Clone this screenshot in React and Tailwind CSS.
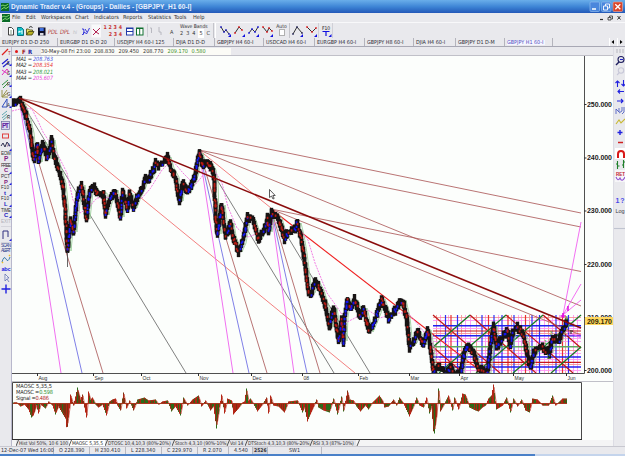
import React from "react";
import clsx from "clsx";

const menuItems = [
  { label: "File", width: "w-[14px]" },
  { label: "Edit", width: "w-[15px]" },
  { label: "Workspaces", width: "w-[34px]" },
  { label: "Chart", width: "w-[19px]" },
  { label: "Indicators", width: "w-[29px]" },
  { label: "Reports", width: "w-[25px]" },
  { label: "Statistics", width: "w-[26px]" },
  { label: "Tools", width: "w-[19px]" },
  { label: "Help", width: "w-[14px]" },
];

const chartTabs = [
  { label: "EURJPY D1 D-D 250", width: "w-[58px]" },
  { label: "EURGBP D1 D-D 20", width: "w-[57px]" },
  { label: "USDJPY H4 60-I 125", width: "w-[59px]" },
  { label: "DJIA D1 D-D", width: "w-[41px]" },
  { label: "GBPJPY H4 60-I", width: "w-[49px]" },
  { label: "USDCAD H4 60-I", width: "w-[51px]" },
  { label: "EURGBP H4 60-I", width: "w-[50px]" },
  { label: "GBPJPY H8 60-I", width: "w-[49px]" },
  { label: "DJIA H4 60-I", width: "w-[42px]" },
  { label: "GBPJPY D1 D-M", width: "w-[49px]" },
  { label: "GBPJPY H1 60-I", width: "w-[48px]", active: true },
];

const indicatorTabs = [
  { label: "Hist Vol 50%, 10 6 100", width: "w-[53px]" },
  { label: "MAOSC 5,35,5", width: "w-[36px]", active: true },
  { label: "DTOSC 10,4,10,3 (80%-20%)", width: "w-[67px]" },
  { label: "Stoch 4,3,10 (90%-10%)", width: "w-[55px]" },
  { label: "Vol 14", width: "w-[18px]" },
  { label: "DTStoch 4,3,10,3 (80%-20%)", width: "w-[65px]" },
  { label: "RSI 3,3 (87%-10%)", width: "w-[46px]" },
];

const statusItems = [
  { label: "12-Dec-07 Wed 16:00", width: "w-[54px]" },
  { label: "O 228.390", width: "w-[36px]" },
  { label: "H 230.410", width: "w-[36px]" },
  { label: "L 228.340", width: "w-[36px]" },
  { label: "C 229.970", width: "w-[36px]" },
  { label: "R 2.070", width: "w-[31px]" },
  { label: "4.540", width: "w-[24px]" },
  { label: "2526", width: "w-[15px]", dark: true },
  { label: "SW1", width: "w-[54px]" },
];

// [x, y] pivots of the hourly price swing
const price = [
  [12, 104], [16, 102], [19, 99], [23, 108], [27, 120], [30, 133], [32, 153], [34, 158], [37, 144], [38, 162],
  [42, 142], [47, 159], [51, 140], [53, 152], [57, 167], [62, 183], [65, 213], [67, 251], [70, 220], [73, 232],
  [76, 203], [78, 190], [81, 185], [86, 219], [89, 192], [92, 186], [97, 193], [103, 193], [105, 215], [108, 203],
  [114, 190], [117, 202], [120, 217], [122, 194], [127, 208], [129, 194], [133, 208], [137, 197], [142, 187],
  [145, 177], [148, 180], [152, 172], [155, 163], [160, 165], [167, 157], [170, 168], [175, 177], [179, 201],
  [182, 183], [187, 192], [192, 182], [195, 173], [197, 160], [199, 153], [203, 167], [207, 161], [212, 170],
  [214, 183], [215, 217], [217, 234], [221, 205], [225, 236], [230, 223], [232, 236], [238, 252], [242, 243],
  [247, 217], [252, 220], [258, 239], [263, 230], [267, 217], [268, 232], [271, 212], [278, 218], [284, 239],
  [288, 232], [293, 232], [297, 223], [300, 235], [303, 253], [306, 277], [308, 293], [311, 293], [315, 281],
  [320, 290], [325, 307], [329, 327], [333, 308], [338, 341], [341, 320], [343, 341], [344, 317], [347, 300],
  [350, 309], [354, 300], [360, 317], [363, 308], [369, 332], [373, 323], [377, 313], [381, 299], [388, 318],
  [397, 307], [402, 300], [406, 317], [409, 347], [413, 343], [417, 332], [423, 345], [427, 330], [430, 347],
  [433, 373], [438, 367], [445, 374], [450, 367], [454, 375], [460, 373], [464, 352], [468, 345], [473, 353],
  [478, 370], [487, 373], [490, 345], [493, 326], [496, 347], [500, 340], [507, 330], [510, 345], [512, 332],
  [517, 327], [523, 335], [527, 355], [530, 366], [535, 348], [542, 348], [549, 353], [552, 338], [558, 342],
  [562, 330], [567, 322],
];

const oscPivots = [
  [13, 1], [16, 1], [20, -3], [24, -1], [28, -6], [31, -14], [33, -12], [36, -2], [38, -10], [40, -1], [45, -5],
  [48, 2], [52, -2], [55, -11], [58, -3], [62, -10], [65, -15], [66.5, -28], [69, -5], [70, 9], [73, -2], [77, 16],
  [80, 4], [82, 9], [84, -4], [86, -14], [88, 12], [90, 4], [92, 6], [95, -1], [98, -4], [102, -1], [106, -12],
  [109, 2], [112, 4], [115, 5], [117, -2], [120, -7], [123, 11], [126, -5], [129, 3], [133, -7], [137, 4],
  [144, 6], [148, 3], [155, 4], [158, -1], [162, 2], [167, 3], [171, -8], [175, -3], [180, -12], [183, 6], [187, -2],
  [192, 4], [198, 8], [201, -3], [205, 3], [210, -7], [213, -3], [216, -25], [219, -4], [221, 9], [224, -10], [227, 5],
  [231, 3], [233, -11], [238, -5], [242, 1], [244, 2], [246, 15], [248, 3], [250, 5], [257, -8], [262, -1], [266, 6],
  [268, -10], [270, 8], [273, -2], [278, -3], [284, -9], [288, 2], [297, 3], [302, -9], [304, -4], [307, -18],
  [312, -6], [316, 4], [318, -4], [323, -7], [329, -9], [333, 5], [337, -11], [341, 7], [343, -8], [347, 13],
  [349, 4], [353, 3], [356, -3], [360, -8], [365, -2], [368, -6], [372, 1], [379, 8], [382, 3], [384, -4], [388, -3],
  [393, 4], [396, -2], [399, 6], [403, 0], [409, -13], [413, -3], [416, 6], [419, -2], [423, -4], [426, 6],
  [429, -10], [431, -3], [433.5, -34], [436, -14], [438, 15], [440, -8], [443, -2], [448, 8], [452, -7], [454, 6],
  [458, -6], [462, 10], [465, 9], [469, -4], [475, -7], [478, -8], [482, -4], [485, -2], [488, 5], [491, 8], [493, 19],
  [496, -6], [502, -2], [506, 6], [510, -9], [513, 5], [517, -3], [521, 4], [525, -7], [529, -9], [532, 5], [537, 4],
  [542, -2], [548, -2], [552, 8], [555, -2], [562, 5], [566, 5],
];

const months = [
  ["Aug", 37.5], ["Sep", 93.5], ["Oct", 141.5], ["Nov", 198.5], ["Dec", 251.5], ["08", 302.5],
  ["Feb", 358.5], ["Mar", 409.5], ["Apr", 459.5], ["May", 513.5], ["Jun", 566.5],
];

const scale = [["250.000", 104], ["240.000", 157.5], ["230.000", 210.5], ["220.000", 264], ["210.000", 317], ["200.000", 370]];

// x1, y1, x2, y2, color, width
const fans = [
  [19, 98, 581, 213, "#a85050", 0.8],
  [19, 98, 355, 373, "#f06060", 0.8],
  [19, 98, 186, 373, "#606060", 0.8],
  [19, 98, 61, 373, "#f070f0", 1],
  [19, 98, 82, 373, "#7070e4", 0.9],
  [19, 98, 103, 373, "#b06464", 0.9],
  [199, 150, 581, 227, "#a85050", 0.8],
  [199, 150, 581, 306, "#a85050", 0.8],
  [199, 150, 271, 208, "#f06060", 0.8],
  [199, 150, 233, 373, "#f070f0", 1],
  [199, 150, 249, 373, "#7070e4", 0.9],
  [199, 150, 267, 373, "#b06464", 0.9],
  [199, 150, 334, 373, "#606060", 0.8],
  [271, 209, 581, 271.5, "#a85050", 0.8],
  [271, 209, 581, 335, "#a85050", 0.8],
  [271, 209, 294, 373, "#f070f0", 1],
  [271, 209, 307, 373, "#7070e4", 0.9],
  [271, 209, 320, 373, "#b06464", 0.9],
  [271, 209, 370, 373, "#606060", 0.8],
];

const noise = (i) => {
  const v = Math.sin(i * 12.9898) * 43758.5453;
  return v - Math.floor(v);
};

const priceBars = (() => {
  const bars = [];
  for (let i = 1; i < price.length; i++) {
    const [x1, y1] = price[i - 1];
    const [x2, y2] = price[i];
    const n = Math.max(1, Math.round(Math.hypot(x2 - x1, y2 - y1) / 1.7));
    for (let k = 0; k < n; k++) {
      bars.push({
        x: x1 + ((x2 - x1) * k) / n,
        y: y1 + ((y2 - y1) * k) / n + (noise(bars.length + 300) - 0.5) * 4,
        up: y2 < y1,
      });
    }
  }
  return bars;
})();

const oscBars = (() => {
  const bars = [];
  let i = 1;
  for (let x = 13; x <= 566; x++) {
    while (oscPivots[i][0] < x) i++;
    const [x1, v1] = oscPivots[i - 1];
    const [x2, v2] = oscPivots[i];
    bars.push([x, v1 + ((v2 - v1) * (x - x1)) / (x2 - x1)]);
  }
  return bars;
})();

const bg = "bg-[#e9e9ed]";

const Sep = ({ className }) => <div className={clsx("h-full w-px shrink-0 bg-[#c4c4ca]", className)} />;

const WaveIcon = ({ points, line = "#303030", dots = "#e02020", tail = true }) => (
  <svg width="14" height="15" viewBox="0 0 14 15" className="shrink-0">
    <polyline points={points.map((p) => p.join(",")).join(" ")} fill="none" stroke={line} strokeWidth="1" />
    {points.map((p, i) => (
      <rect key={i} x={p[0] - 0.8} y={p[1] - 0.8} width="1.6" height="1.6" fill={dots} />
    ))}
    {tail && <path d="M13 11v3h-3z" fill="#1010e0" />}
  </svg>
);

const AppIcon = () => (
  <svg width="8" height="8" viewBox="0 0 8 8" className="shrink-0">
    <rect width="8" height="8" fill="#0a6a28" />
    <path d="M0 3l2-1 2 1 3.500-2M0 6.500l3-2 2 1 3-2" stroke="#8ae070" strokeWidth=".9" fill="none" />
  </svg>
);

const TitleBar = () => (
  <div className="flex h-[13px] items-center bg-linear-to-b from-[#6aaeea] via-[#3f86d6] to-[#2358b8] pr-[2px] pl-px">
    <AppIcon />
    <span className="ml-[2px] grow pt-px font-['Liberation_Sans'] text-[6.500px] font-bold whitespace-pre text-[#e8f0fc]">
      Dynamic Trader v.4 - (Groups) - Dailies - [GBPJPY_H1 60-I]
    </span>
    <svg width="34" height="11" viewBox="0 0 34 11">
      <rect x="1" y="1" width="9.5" height="9.5" rx="1" fill="#4a86dc" stroke="#9cc4f4" strokeWidth=".6" />
      <path d="M3 8h4" stroke="#fff" strokeWidth="1.5" />
      <rect x="12.5" y="1" width="9.5" height="9.5" rx="1" fill="#4a86dc" stroke="#9cc4f4" strokeWidth=".6" />
      <path d="M16.5 5V3h4v4h-2M14.5 5h4v4h-4z" stroke="#fff" fill="none" strokeWidth=".9" />
      <rect x="24" y="1" width="9.5" height="9.5" rx="1" fill="#d8452c" stroke="#f4b0a0" strokeWidth=".6" />
      <path d="M26.300 3.300l5 5m0-5l-5 5" stroke="#fff" strokeWidth="1.300" />
    </svg>
  </div>
);

const MenuBar = () => (
  <div className="flex h-[9px] items-center pl-[2px] text-[5.600px] text-[#303030]">
    <AppIcon />
    <div className="ml-[2px] flex grow">
      {menuItems.map((item) => (
        <span key={item.label} className={clsx("shrink-0 whitespace-nowrap", item.width)}>{item.label}</span>
      ))}
    </div>
    <svg width="26" height="8" viewBox="0 0 26 8" fill="none" stroke="#303030">
      <path d="M1 5.500h3" strokeWidth="1.200" />
      <path d="M10.500 3V2h3v3h-1M9 3.500h3v2.500h-3z" strokeWidth=".8" />
      <path d="M18.500 2l3 3.500m0-3.500l-3 3.500" strokeWidth="1" />
    </svg>
  </div>
);

const Toolbar = () => (
  <div className="flex h-4 items-stretch border-t border-[#f8f8fa]">
    <svg width="102" height="15" viewBox="0 0 102 15" className="shrink-0">
      <path d="M1 1v13" stroke="#fff" />
      <path d="M8.500 4.500h3l2 2v5.500h-5z" fill="#fff" stroke="#303030" strokeWidth=".9" />
      <path d="M10 8h2M10 10h2" stroke="#507050" strokeWidth=".7" />
      <path d="M17.500 4.500h4l2 2v6h-6z" fill="#10c0c8" stroke="#087080" />
      <path d="M19 10V8l1.500 1L22 7.500V11" stroke="#fff" fill="none" />
      <path d="M26.500 12V6h2l1 1h3v1.500" fill="#e8e060" stroke="#404010" strokeWidth=".8" />
      <path d="M26.500 12l2-3.500H34l-2 3.500z" fill="#b8b020" stroke="#404010" strokeWidth=".8" />
      <path d="M29 4.500q2-2 3.500 0" stroke="#303030" fill="none" />
      <rect x="38" y="4.500" width="7.500" height="8" fill="#101028" />
      <rect x="39.700" y="5" width="4" height="3" fill="#4070e0" />
      <rect x="40" y="10" width="3.500" height="2.500" fill="#d8d8e0" />
      <g fontSize="6" fontStyle="italic" fill="#b04040">
        <text x="48" y="10.800" textLength="10" lengthAdjust="spacingAndGlyphs">PDL</text>
        <text x="60" y="10.800" textLength="10" lengthAdjust="spacingAndGlyphs">DPL</text>
        <text x="73" y="10.500" fontSize="5" fill="#b8b8c0">hi</text>
      </g>
      <path d="M82 6q2-1 2 2t-1.500 4M82.500 12l2-3 2 2 3-6M85 6l2 3" stroke="#2020d8" fill="none" strokeWidth=".9" />
      <rect x="91.500" y="1.500" width="9.500" height="13" fill="#fff" opacity=".7" />
      <path d="M93 6l3 3 4-4M93 12l3-3 3 2" stroke="#b02050" fill="none" />
    </svg>
    <div className="flex w-[21px] shrink-0 flex-col justify-center pl-[1.500px] text-[5.300px] leading-[6.500px] font-bold text-[#c83030]">
      <div className="flex justify-between pr-px"><span>1</span><span>2</span><span>3</span><span>4</span></div>
      <div className="flex justify-between pr-px pl-[5.300px]"><span>2</span><span>3</span><span>4</span></div>
    </div>
    <svg width="56" height="15" viewBox="0 0 56 15" className="shrink-0">
      <rect x="3.500" y="5" width="6.500" height="7" fill="#fff" stroke="#2038a8" />
      <path d="M3 8.500h7M3 5.500h7" stroke="#2038a8" />
      <rect x="13.500" y="5" width="6.500" height="7" fill="#fff" stroke="#107030" />
      <path d="M16.700 5v7M13 5.500h7" stroke="#107030" />
      <path d="M24.500 1v13" stroke="#c0c0c8" strokeWidth=".7" />
      <path d="M27 5h1.500v5M36 4v5h2v3" stroke="#b8b8c0" fill="none" />
      <text x="47" y="11" fontSize="5.500" fill="#404040">A</text>
    </svg>
    <div className="flex w-[34px] shrink-0 flex-col text-[5px] leading-[6px] text-[#303030]">
      <span className="pl-px whitespace-nowrap">Wave Bands</span>
      <div className="flex justify-between pr-[3px] pl-px text-[5.500px] leading-[9px]">
        <span>2</span><span>3</span><span>4</span><span className="bg-white px-px">5</span><span>C</span>
      </div>
    </div>
    <Sep />
    <Sep className="ml-px bg-white" />
    <div className="ml-[2px] flex">
      <WaveIcon points={[[3, 4], [6, 9], [8, 7], [11, 11]]} dots="#2020c0" />
      <WaveIcon points={[[3, 10], [7, 4], [10, 7]]} />
      <WaveIcon points={[[3, 10], [6, 6], [9, 9], [12, 4]]} dots="#2020e0" />
      <WaveIcon points={[[3, 4], [7, 9], [9, 5], [12, 8]]} />
    </div>
    <div className="flex w-[15px] shrink-0 flex-col items-center text-[5px] leading-[6px] text-[#303030]">
      <span>Auto</span>
      <span className="h-[7px] w-[6px] border border-[#b0b0b0] bg-white" />
    </div>
    <div className="flex items-stretch">
      <Sep />
      <WaveIcon points={[[3, 11], [7, 4], [12, 10]]} dots="#303060" />
      <WaveIcon points={[[3, 4], [8, 9], [12, 5]]} />
      <svg width="15" height="15" viewBox="0 0 15 15">
        <path d="M.5 0v15M14.500 0v15" stroke="#c0c0c8" strokeWidth=".6" />
        <text x="4" y="6.500" fontSize="5" fill="#202020" textLength="8">F10</text>
        <path d="M4.500 8.500h7M8 8v5" stroke="#1010e0" strokeWidth="1.200" />
        <path d="M13.500 11v3h-3z" fill="#1010e0" />
      </svg>
    </div>
  </div>
);

const ChartTabs = () => (
  <div className="flex h-[9px] items-center border-b border-[#a8a8b4] text-[5.400px] text-[#303038]">
    {chartTabs.map((tab) => (
      <div
        key={tab.label}
        className={clsx("flex h-full shrink-0 items-center border-r border-[#b4b4bc] pt-[1.500px] pl-[2px] whitespace-pre", tab.width)}
      >
        <span className={tab.active ? "bg-[#f6f6ff] pr-[2px] text-[#5050c0]" : ""}>{tab.label}</span>
      </div>
    ))}
    <svg width="16" height="8" viewBox="0 0 16 8" className="ml-auto">
      <path d="M.5 0v8M8.500 0v8" stroke="#fff" />
      <path d="M5 2v4L2.500 4zM11 2v4l2.500-2z" fill="#000" />
    </svg>
  </div>
);

const LeftTools = () => (
  <div className="w-3 shrink-0 border-r border-[#b8b8cc]">
    <svg width="12" height="399" viewBox="0 47 12 399" fontFamily="Liberation Sans">
      <g fill="none" strokeWidth="1">
        <path d="M2 55l6-6" stroke="#e02020" strokeWidth="1.300" />
        <path d="M2 64l6-5M3 67l6-5" stroke="#2020d0" strokeWidth="1.200" />
        <path d="M2 75l5-6 2 3M2 70l6 4" stroke="#e030c0" />
        <path d="M2 85l6-5M3 88l5-5" stroke="#309040" />
        <path d="M2 97V90M2 97h6M2 97l5-7M2 97l6-4" stroke="#98944a" />
        <path d="M2 107l5-8v8z" stroke="#3050c0" />
        <path d="M2 115l5-4M2 118l5-4M3 120l6-5" stroke="#60a8b0" />
        <rect x="1.500" y="121.500" width="8" height="8" fill="#d8d8f0" stroke="#7070a0" strokeWidth=".7" />
        <rect x="2.500" y="134" width="6" height="4" stroke="#e04040" />
        <path d="M1 146l2-3 2 4 2-5 3 4" stroke="#303050" />
        <path d="M3 239v-8h5v6" stroke="#303080" />
        <path d="M2 262q2-7 4-3t4-2" stroke="#4080b0" />
        <path d="M2 263l1-1M9 256l1-1" stroke="#f0c020" strokeWidth="1.500" />
        <path d="M5 274v7l2-2 2 3M5 274l4 4H6.500" stroke="#6070b0" fill="#fff" strokeWidth=".8" />
        <path d="M1.500 289h9M6 284.500v9" stroke="#2020e0" strokeWidth="1.400" />
        <path d="M1 226.500h10M1 242.500h10" stroke="#c8c8d0" strokeWidth=".6" />
      </g>
      {[66, 77, 87, 98, 108, 151, 174, 185, 196, 207, 218, 241].map((y) => (
        <path key={y} d={`M11.500 ${y - 2.500}v2.500h-2.500z`} fill="#1818e0" />
      ))}
      <g fontSize="4.500" fill="#303030">
        <text x="8" y="55" fill="#c02020">T</text>
        <text x="7" y="64.500">E</text>
        <text x="7" y="75">S</text>
        <text x="7" y="86">R</text>
        <text x="7" y="96">G</text>
        <text x="7" y="107">A</text>
        <text x="7" y="119">R</text>
        <text x="7" y="147" fill="#303080">A</text>
        <text x="1" y="155" textLength="10">EOW</text>
        <text x="1" y="166.500" textLength="10">FREE</text>
        <text x="1" y="177.800" textLength="9">PCT</text>
        <text x="1" y="189" textLength="8">F10</text>
        <text x="1" y="200.300" textLength="8">F10</text>
        <text x="1" y="211.600" textLength="10">TIME</text>
        <text x="1" y="223" textLength="10" fill="#b0b0b8">EXIT</text>
        <text x="1" y="246.500" textLength="10" fill="#304090">SCAN</text>
        <text x="1" y="251.500" textLength="10" fill="#304090">ALERT</text>
      </g>
      <g fontSize="6.500" fontWeight="bold">
        <text x="2" y="127.800" fill="#6020a0" textLength="7">PT</text>
        <text x="4" y="161" fill="#802080">P</text>
        <g fontSize="5.800">
          <text x="4" y="172.300" fill="#802080">C</text>
          <text x="4" y="183.500" fill="#802080">P</text>
          <text x="4" y="194.800" fill="#2020c0">t</text>
          <text x="4" y="206" fill="#2020c0">L</text>
          <text x="4" y="217.300" fill="#2020c0">C</text>
        </g>
        <text x="1.500" y="271" fill="#2020e0" fontSize="5.500" textLength="9">abc</text>
      </g>
    </svg>
  </div>
);

const RightTools = () => (
  <div className="w-3 shrink-0 border-l border-[#dcdce4]">
    <svg width="12" height="399" viewBox="613 47 12 399" fontFamily="Liberation Sans">
      <g fill="none" strokeWidth="1.100">
        <path d="M615 50h9M615 52h9" stroke="#b8b8c0" strokeDasharray="2 1" />
        <path d="M615 65l3-3" stroke="#202060" strokeWidth="1.500" />
        <circle cx="620" cy="59.500" r="3" stroke="#202060" />
        <path d="M619 59.500h3" stroke="#2020d0" />
        <path d="M616 75l2-2" stroke="#c8c8d8" />
        <circle cx="620" cy="70.500" r="2.700" stroke="#c8c8d8" />
        <path d="M616.500 87v-6m-2 2l2-2 2 2M622.500 80v6m-2-2l2 2 2-2" stroke="#2020e0" />
        <path d="M623 91.500h-6m2-2l-2 2 2 2M616 101h6m-2-2l2 2-2 2" stroke="#2020e0" />
        <path d="M615 114v-5l3 3v-4m0 5l3-2v-4m0 7l2-2v-5" stroke="#4050c0" strokeWidth=".8" />
        <path d="M615 124l3-4 2 3 4-4" stroke="#c8b830" />
        <path d="M616.500 132.500h5M619 130v5" stroke="#2020e0" strokeWidth="1.400" />
        <path d="M617 142.500h5" stroke="#d02020" strokeWidth="1.500" />
        <rect x="614" y="148" width="11" height="11" fill="#fff" stroke="none" />
        <path d="M617 158v-4q0-3 3-3t3 3v4" stroke="#d81818" strokeWidth="2" />
        <path d="M616.500 161v8M615 164h1.500M616.500 166h2M622.500 160v8M621 165h1.500M622.500 162h2" stroke="#20802c" />
        <rect x="614" y="170" width="11" height="12" fill="#fff" opacity=".6" stroke="none" />
        <path d="M615 177q2 5 4 1 2 5 5-1" stroke="#9050d0" />
        <path d="M613 228.500h12" stroke="#c0c4d0" />
      </g>
      <text x="615" y="176" fontSize="4.500" fontWeight="bold" fill="#c02030" textLength="9">RET</text>
      <text x="614.500" y="202.500" fontSize="7" fontWeight="bold" fill="#4848e8" textLength="9">1?</text>
      <text x="614.500" y="213" fontSize="5.500" fill="#404048" textLength="9">Log</text>
    </svg>
  </div>
);

const InfoRow = () => (
  <div className="flex h-[9px] items-center border-b border-[#c0c0c8] bg-[#e9e9ed] pt-px text-[5.500px] text-[#303030]">
    <span className="flex w-[10px] shrink-0 pl-[3px]">
      <span className="size-[3px] rounded-full bg-[#e01818]" />
    </span>
    <span className="w-[6px] text-[6px] font-bold text-[#a02020]">F</span>
    <span className="w-[13px] text-[6px] font-bold text-[#2020a0]">R</span>
    <div className="flex h-[7px] w-[190px] items-center bg-[#fbfbf6] whitespace-nowrap">
      <span className="w-[53px]">30-May-08 Fri 23:00</span>
      <span className="w-[24.500px]">208.830</span>
      <span className="w-[24.500px]">209.450</span>
      <span className="w-[24.500px]">208.770</span>
      <span className="w-[24px] text-[#409028]">209.170</span>
      <span className="text-[#409028]">0.580</span>
    </div>
  </div>
);

const TimeGrid = () => {
  const blueX = [445.5, 457.5, 482, 494, 502, 514, 532, 539.5, 556, 568.5];
  const redX = [451, 488.5, 508, 525.5, 562.5];
  const pinkX = [436.5, 440.5, 448.5, 461.5, 465.5, 470.5, 476.5, 485.5, 498.5, 511.5, 518.5, 521.5, 529.5, 536.5, 544.5, 548.5, 552.5, 559.5, 565.5, 573.5, 577.5];
  const pinkY = [317.5, 320.5, 328.5, 333.5, 338.5, 341.5, 350.5, 353.5, 359.5, 364.5, 370.5];
  const reds = [[433, 315, 500, 373], [470, 315, 536, 373], [506, 315, 573, 373], [543, 315, 581, 348], [433, 347, 463, 373]];
  const greens = [[433, 347, 470, 315], [439, 373, 506, 315], [476, 373, 543, 315], [513, 373, 581, 315], [551, 373, 581, 347]];
  return (
    <g strokeWidth="1">
      {pinkX.map((x, i) => <path key={x} d={`M${x} 315v58`} stroke={i % 3 ? "#ff96f4" : "#f49494"} strokeWidth=".9" />)}
      {pinkY.map((y, i) => <path key={y} d={`M433 ${y}h148`} stroke={i % 3 ? "#ff96f4" : "#f49494"} strokeWidth=".9" />)}
      {blueX.map((x) => <path key={x} d={`M${x} 315v58`} stroke="#3030f4" strokeWidth="1.200" />)}
      {redX.map((x) => <path key={x} d={`M${x} 315v58`} stroke="#e83030" strokeWidth="1.200" />)}
      {[325.7, 335.7, 357, 367].map((y) => <path key={y} d={`M433 ${y}h148`} stroke="#2020f0" strokeWidth="1.400" />)}
      {[331, 362.3].map((y) => <path key={y} d={`M433 ${y}h148`} stroke="#c81818" strokeWidth="1.200" />)}
      <path d="M433 346.700h148" stroke="#60a860" strokeWidth="1.500" />
      {reds.map((l, i) => <line key={i} x1={l[0]} y1={l[1]} x2={l[2]} y2={l[3]} stroke="#c01818" strokeWidth="1.200" />)}
      {greens.map((l, i) => <line key={i} x1={l[0]} y1={l[1]} x2={l[2]} y2={l[3]} stroke="#187828" strokeWidth="1.300" />)}
    </g>
  );
};

const PriceChart = () => (
  <svg width="601" height="325" viewBox="12 56 601 325" className="block shrink-0 bg-[#fcfefc]" fontFamily="Liberation Sans">
    <clipPath id="plot">
      <rect x="12" y="56" width="570" height="317" />
    </clipPath>
    <g clipPath="url(#plot)" fill="none">
      <TimeGrid />
      {fans.map((l, i) => (
        <line key={i} x1={l[0]} y1={l[1]} x2={l[2]} y2={l[3]} stroke={l[4]} strokeWidth={l[5]} />
      ))}
      <path d="M271 209L483 373" stroke="#f02020" strokeWidth="1.100" />
      {/* moving averages */}
      <polyline
        points={price.map((p) => `${p[0] + 4},${p[1]}`).join(" ")}
        stroke="#90c890"
        strokeWidth=".8"
        strokeLinejoin="round"
      />
      <path
        d="M12 111L24 108 32 109 38 121 43 132 58 155 67 173 73 200 80 213 88 208 97 198 113 197 133 200 142 198 150 189 162 170 172 160 183 173 195 185 205 173 213 168 222 183 228 207 237 228 248 237 262 232 276 222 290 232 301 231 308 240 315 263 327 293 337 307 347 322 357 317 368 310 380 318 397 313 408 313 420 327 432 342 440 362"
        stroke="#f070e0"
        strokeWidth=".9"
        strokeDasharray="2 1"
      />
      {priceBars.map((b, i) => {
        const h = 4 + noise(i) * 5;
        return <path key={i} d={`M${Math.round(b.x) + 0.5} ${b.y - h / 2}v${h}`} stroke="#181414" strokeWidth="3.400" />;
      })}
      {priceBars.map((b, i) => {
        if (noise(i + 900) < 0.5) return null;
        const y = b.y - 1.5 + noise(i + 40) * 2;
        return <rect key={i} x={Math.round(b.x) - 0.3} y={y} width="1.700" height="2.300" fill={b.up ? "#1414f0" : "#b81c14"} />;
      })}
      <path d="M67.500 252v15" stroke="#404040" strokeWidth=".8" />
      <path d="M19 98L581 328" stroke="#8a0c0c" strokeWidth="1.600" />
      <path d="M563 315L581 222M563 315l18-31M563 315l18-15M566 331l15 7M566 335h15" stroke="#f060f0" strokeWidth=".9" />
      <path d="M563 313v5M560.500 316h5M568 306v5" stroke="#e010e0" strokeWidth="1.600" />
      <g fill="#30a030" fontSize="5.500" stroke="none">
        <text x="544" y="344">1</text>
        <text x="547" y="359">2</text>
        <text x="549.500" y="335">3</text>
        <text x="565" y="320">5</text>
      </g>
      <path d="M570 331h3M570 333h2" stroke="#202020" />
      <path d="M269.500 189.500v8l2-1.500 1.500 3 1.200-.6-1.400-2.900h2.400z" fill="#fff" stroke="#303030" strokeWidth=".8" />
    </g>
    <g fontSize="5.800" fontStyle="italic" fill="#303030" fontFamily="DejaVu Sans Condensed">
      {[["MA1 =", "208.763", "#4050e0"], ["MA2 =", "208.354", "#e83030"], ["MA3 =", "208.021", "#309838"], ["MA4 =", "205.607", "#e840d8"]].map((m, i) => (
        <React.Fragment key={m[0]}>
          <text x="16" y={61 + i * 6.3} textLength="16">{m[0]}</text>
          <text x="33" y={61 + i * 6.3} textLength="20" lengthAdjust="spacingAndGlyphs" fill={m[2]}>{m[1]}</text>
        </React.Fragment>
      ))}
    </g>
    <path d="M584.500 56V373.500M12 373.500H584.500" stroke="#505050" fill="none" />
    {scale.map(([label, y]) => (
      <g key={label}>
        <path d={`M584 ${y + 0.5}h2.500`} stroke="#303030" />
        <text x="587" y={y + 2.7} fontSize="7" fontWeight="bold" fill="#202020" textLength="25">{label}</text>
      </g>
    ))}
    <rect x="585" y="317" width="28" height="8" fill="#ffd860" />
    <text x="587" y="323.700" fontSize="7" fontWeight="bold" fill="#302808" textLength="25">209.170</text>
    {months.map(([label, x]) => (
      <g key={label}>
        <path d={`M${x} 373v3`} stroke="#303030" />
        <text x={x + 1} y="380" fontSize="5" fill="#303030">{label}</text>
      </g>
    ))}
  </svg>
);

const Oscillator = () => (
  <svg width="601" height="59" viewBox="12 381 601 59" className="block shrink-0 bg-[#fcfefc]" fontFamily="DejaVu Sans Condensed">
    <path d="M12 381.500h601" stroke="#c0c0c8" />
    <path d="M12.500 382.500h569v57h-569z" fill="none" stroke="#484848" />
    <path d="M12 439.500h570" stroke="#303030" />
    {oscBars.map(([x, v]) => (
      <path key={x} d={`M${x + 0.5} 403.500v${-v}`} stroke={noise(x) > 0.64 ? "#286c18" : noise(x) > 0.3 ? "#b02414" : "#7c3010"} />
    ))}
    <polyline
      points={oscBars.map(([x, v]) => `${x + 1},${403.5 - v * 0.85}`).join(" ")}
      fill="none"
      stroke="#b82818"
      strokeWidth=".7"
    />
    <path d="M13 403.500h554" stroke="#a83820" strokeWidth="1" />
    <g fontSize="5.600" fill="#282828">
      <text x="16" y="387.700" textLength="36">MAOSC 5,35,5</text>
      <text x="16" y="393.700" textLength="37">MAOSC =<tspan fill="#309030">0.598</tspan></text>
      <text x="16" y="400.200" textLength="33">Signal =<tspan fill="#b02020">0.486</tspan></text>
    </g>
  </svg>
);

const IndicatorTabs = () => (
  <div className="flex h-[6px] items-center bg-[#f4f4f5] pl-1 text-[5px] leading-[6px] text-[#303030]">
    {indicatorTabs.map((tab) => (
      <div key={tab.label} className={clsx("flex shrink-0 items-center whitespace-nowrap", tab.width, tab.active ? "bg-white" : "bg-[#e4e4e8]")}>
        <svg width="3" height="6" viewBox="0 0 3 6" className="shrink-0">
          <path d="M2.500 0L0 6" stroke="#303030" strokeWidth=".8" />
        </svg>
        <span className="tracking-[-0.100px]">{tab.label}</span>
      </div>
    ))}
    <svg width="4" height="6" viewBox="0 0 4 6">
      <path d="M3.500 0L1 6" stroke="#303030" strokeWidth=".8" />
    </svg>
  </div>
);

const StatusBar = () => (
  <div className="flex h-2 items-center border-t border-[#c8c8d0] text-[5.400px] text-[#303038]">
    {statusItems.map((item, i) => (
      <div
        key={item.label}
        className={clsx(
          "flex h-full shrink-0 items-center border-r border-[#b8b8c0] whitespace-nowrap",
          item.width,
          i === 0 ? "pl-px" : i < 8 ? "pl-[5px]" : "pl-[21px]",
          item.dark && "bg-[#d4d4da] pl-px! text-[5px] font-bold"
        )}
      >
        {item.label}
      </div>
    ))}
  </div>
);

const App = () => {
  return (
    <div className={clsx("flex h-[456px] w-[625px] flex-col overflow-hidden font-['DejaVu_Sans_Condensed','Liberation_Sans',sans-serif] leading-none", bg)}>
      <TitleBar />
      <MenuBar />
      <Toolbar />
      <ChartTabs />
      <div className="flex h-[399px]">
        <LeftTools />
        <div className="flex w-[601px] shrink-0 flex-col">
          <InfoRow />
          <PriceChart />
          <Oscillator />
          <IndicatorTabs />
        </div>
        <RightTools />
      </div>
      <StatusBar />
      <div className="flex h-[2px]">
        <div className="w-[535px] bg-[#4a80c8]" />
        <div className="grow bg-[#c4d4ec]" />
      </div>
    </div>
  );
};

export default App;
